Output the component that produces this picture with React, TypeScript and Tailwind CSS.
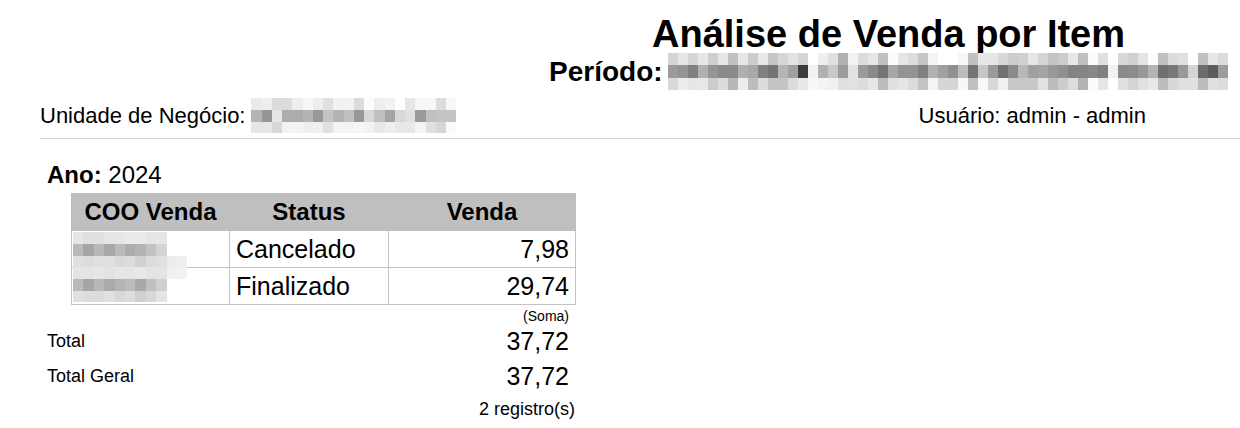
import React from "react";

type Grid = string[][];

function Mosaic({ grid, cell }: { grid: Grid; cell: string }) {
  return (
    <div className="flex flex-col shrink-0">
      {grid.map((r, i) => (
        <div key={i} className="flex">
          {r.map((c, j) => (
            <div
              key={j}
              className={cell}
              style={{ backgroundColor: c === "" ? "transparent" : "#" + c + c + c }}
            />
          ))}
        </div>
      ))}
    </div>
  );
}

const periodo: Grid = [
  "d4 e6 d6 e6 cf e6 c0 e6 cc e8 c6 d6 e2 d6 ff ee e0 b0 f2 dc e6 c0 fc e6 dc c6 f4 ff ff f6 c0 e6 e6 d8 cc d0 e6 d4 c4 cc e8 c0 fc e0 ff d8 d0 e4 fc c0 dc e0 ff c0 e6 dc".split(" "),
  "9a 94 80 b0 94 8a 8a b0 a8 80 74 b4 a0 3c f2 b0 c8 9c e2 9a 8a 74 a6 94 94 80 b0 a0 90 bc 74 c6 9a 70 8a b8 a0 a4 98 90 84 84 88 80 f2 8a 8c 98 b4 70 78 98 d4 6c 5c 9c".split(" "),
  "d8 ec e6 e8 cc dc b8 ec bc dc c4 c4 dc e8 f8 f4 f0 e0 e2 dc e6 bc e0 e6 dc c4 f4 d6 d6 f8 c0 f8 d8 f0 c8 c8 c8 e2 bc cc dc b4 fc e6 ff e0 d4 e0 e8 bc d8 e0 e0 bc e0 dc".split(" "),
];

const unidade: Grid = [
  "ea ee dc dc ee f6 ee e0 f2 f2 dc fc ee f2 fe e6 f6 f6 dc f8".split(" "),
  "b4 96 e6 ac ac b4 98 c4 b4 c0 98 d8 c0 a4 d8 e0 9a c0 c4 c4".split(" "),
  "e6 e6 d8 f4 f4 ee f0 e0 f4 f4 f6 f2 e8 ee e8 e8 f4 e0 d6 fa".split(" "),
];

const coo: Grid = [
  "e6 e0 e0 e6 e6 ea ea e6 e6 _ _".split(" "),
  "ba a6 b8 a8 ba ac b4 c2 d4 _ _".split(" "),
  "e0 dc e0 e0 d8 dc d0 dc e0 ec f0".split(" "),
  "e4 e4 e6 e2 e6 e4 e8 e4 e4 f0 f2".split(" "),
  "ba a6 b8 aa b4 bc a8 c0 d0 _ _".split(" "),
  "e0 dc dc e0 d8 dc d0 d8 e4 _ _".split(" "),
].map((r) => r.map((c) => (c === "_" ? "" : c)));

export default function App() {
  return (
    <div className="w-[1240px] h-[428px] bg-white text-black font-['Liberation_Sans',Arial,sans-serif] overflow-hidden">
      <div className="pt-[15px] pl-[652px] text-[38px] leading-[38px] font-bold whitespace-nowrap">
        Análise de Venda por Item
      </div>
      <div className="pl-[549px] flex items-center">
        <span className="text-[28px] leading-[28px] font-bold pr-[5px]">Período:</span>
        <Mosaic grid={periodo} cell="w-[10px] h-[12.4px]" />
      </div>

      <div className="mt-[8px] ml-[40px] pb-[5px] border-b border-[#d0d0d0] flex items-center justify-between pr-[94px]">
        <div className="flex items-center">
          <span className="text-[22px] leading-[22px] pr-[6px]">Unidade de Negócio:</span>
          <Mosaic grid={unidade} cell="w-[10.25px] h-[11.7px]" />
        </div>
        <span className="text-[22px] leading-[22px]">Usuário: admin - admin</span>
      </div>

      <div className="pt-[24px] pl-[47px] text-[24px] leading-[24px]">
        <span className="font-bold">Ano:</span> 2024
      </div>

      <div className="mt-[6px] ml-[71px] w-[505px] relative">
        <table className="w-full border-collapse text-[25px] leading-[26px]">
          <thead>
            <tr className="h-[37px] bg-[#bfbfbf]">
              <th className="w-[158px] border border-[#bdbdbd] font-bold text-[24px] leading-[26px] text-center p-0">COO Venda</th>
              <th className="w-[159px] border border-[#bdbdbd] font-bold text-[24px] leading-[26px] text-center p-0">Status</th>
              <th className="border border-[#bdbdbd] font-bold text-[24px] leading-[26px] text-center p-0">Venda</th>
            </tr>
          </thead>
          <tbody>
            <tr className="h-[37px]">
              <td className="border border-[#c4c4c4] p-0"></td>
              <td className="border border-[#c4c4c4] pl-[6px] p-0 text-left">Cancelado</td>
              <td className="border border-[#c4c4c4] pr-[6px] text-right">7,98</td>
            </tr>
            <tr className="h-[37px]">
              <td className="border border-[#c4c4c4] p-0"></td>
              <td className="border border-[#c4c4c4] pl-[6px] p-0 text-left">Finalizado</td>
              <td className="border border-[#c4c4c4] pr-[6px] text-right">29,74</td>
            </tr>
          </tbody>
        </table>
        <div className="absolute left-[2px] top-[39px]">
          <Mosaic grid={coo} cell="w-[10.4px] h-[11.7px]" />
        </div>
      </div>

      <div className="ml-[47px] w-[522px]">
        <div className="flex justify-end text-[14px] leading-[16px] mt-[3px]">(Soma)</div>
        <div className="flex items-center justify-between h-[35px]">
          <span className="text-[18px]">Total</span>
          <span className="text-[25px]">37,72</span>
        </div>
        <div className="flex items-center justify-between h-[35px]">
          <span className="text-[18px]">Total Geral</span>
          <span className="text-[25px]">37,72</span>
        </div>
      </div>
      <div className="ml-[47px] w-[528px] flex justify-end text-[18px] leading-[20px] mt-[5px]">
        2 registro(s)
      </div>
    </div>
  );
}
